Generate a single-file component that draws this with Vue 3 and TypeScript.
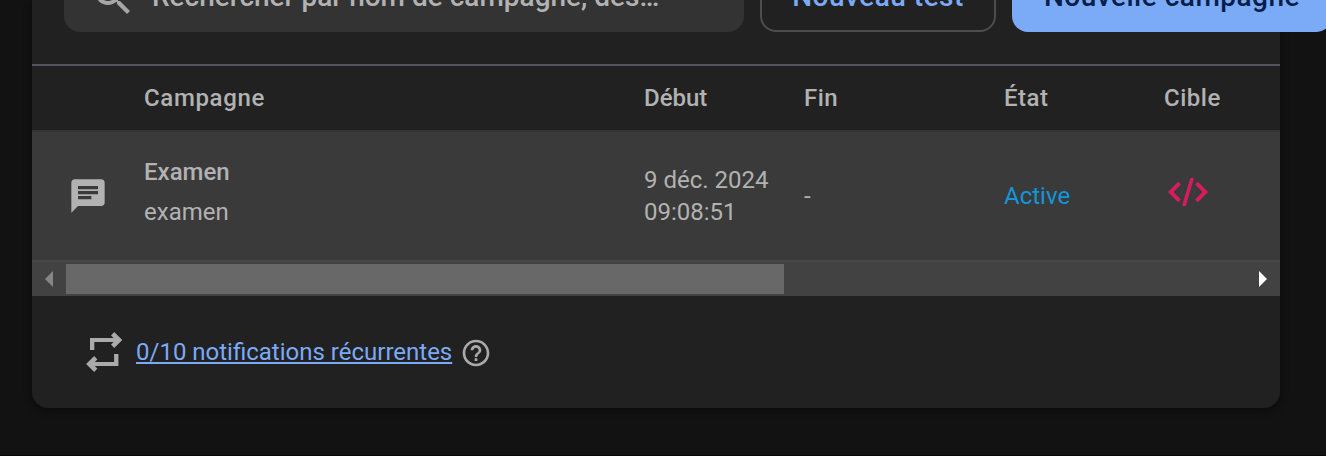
<script setup lang="ts">
interface Campaign {
  title: string
  body: string
  start: string[]
  end: string
  state: string
}

interface Column {
  key: string
  label: string
}

const columns: Column[] = [
  { key: 'kind-col', label: '' },
  { key: 'name-col', label: 'Campagne' },
  { key: 'start-col', label: 'Début' },
  { key: 'end-col', label: 'Fin' },
  { key: 'state-col', label: 'État' },
  { key: 'target-col', label: 'Cible' },
]

const campaigns: Campaign[] = [
  { title: 'Examen', body: 'examen', start: ['9 déc. 2024', '09:08:51'], end: '-', state: 'Active' },
]
</script>

<template>
  <div class="page">
    <section class="card">
      <div class="toolbar">
        <div class="search">
          <svg class="search-icon" viewBox="0 0 24 24">
            <path d="M15.5 14h-.79l-.28-.27A6.47 6.47 0 0 0 16 9.5 6.5 6.5 0 1 0 9.5 16c1.61 0 3.09-.59 4.23-1.57l.27.28v.79l5 4.99L20.49 19l-4.99-5zm-6 0C7.01 14 5 11.99 5 9.5S7.01 5 9.5 5 14 7.01 14 9.5 11.99 14 9.5 14z" />
          </svg>
          <span class="search-text">Rechercher par nom de campagne, des…</span>
        </div>
        <button class="btn outlined">Nouveau test</button>
        <button class="btn filled">Nouvelle campagne</button>
      </div>

      <div class="table">
        <div class="row head">
          <div v-for="col in columns" :key="col.key" :class="col.key">{{ col.label }}</div>
        </div>
        <div v-for="c in campaigns" :key="c.title" class="row data">
          <div class="kind">
            <svg viewBox="0 0 24 24">
              <path d="M20 2H4c-1.1 0-1.99.9-1.99 2L2 22l4-4h14c1.1 0 2-.9 2-2V4c0-1.1-.9-2-2-2zM6 9h12v2H6V9zm8 5H6v-2h8v2zm4-6H6V6h12v2z" />
            </svg>
          </div>
          <div class="name">
            <strong>{{ c.title }}</strong>
            <span>{{ c.body }}</span>
          </div>
          <div class="date">
            <span v-for="line in c.start" :key="line">{{ line }}</span>
          </div>
          <div>{{ c.end }}</div>
          <div class="state">{{ c.state }}</div>
          <div class="target">
            <svg viewBox="0 0 48 48">
              <path d="M4 24 14.2 13.8 16.8 16.4 9.500 24 16.800 31.600 14.200 34.200ZM44 24 33.800 13.800 31.200 16.400 38.500 24 31.200 31.600 33.800 34.200ZM26.300 10H30L21.800 38H18Z" />
            </svg>
          </div>
        </div>
      </div>

      <div class="scrollbar">
        <svg class="arrow left" viewBox="0 0 34 34"><path d="M21 9v16l-8-8z" /></svg>
        <div class="track"><div class="thumb"></div></div>
        <svg class="arrow right" viewBox="0 0 34 34"><path d="M13 9v16l8-8z" /></svg>
      </div>

      <footer class="footer">
        <svg class="repeat" viewBox="0 0 48 48">
          <path d="M10 22V10H33.6L31 7.4 34.2 4 42.3 12 34.2 20 31 16.6 33.6 14H14.3V22ZM38.400 26V38H14.800L17.400 40.600 14.200 44 6.100 36 14.200 28 17.400 31.400 14.800 34H34.100V26Z" />
        </svg>
        <a class="quota">0/10 notifications récurrentes</a>
        <svg class="help" viewBox="0 0 24 24">
          <path d="M11 18h2v-2h-2v2zm1-16C6.480 2 2 6.480 2 12s4.480 10 10 10 10-4.480 10-10S17.520 2 12 2zm0 18c-4.410 0-8-3.590-8-8s3.590-8 8-8 8 3.590 8 8-3.590 8-8 8zm0-14c-2.210 0-4 1.790-4 4h2c0-1.100.9-2 2-2s2 .9 2 2c0 2-3 1.750-3 5h2c0-2.250 3-2.500 3-5 0-2.210-1.790-4-4-4z" />
        </svg>
      </footer>
    </section>
  </div>
</template>

<style>
body {
  background: #121212;
}
</style>

<style scoped>
.page {
  box-sizing: border-box;
  height: 456px;
  padding: 0 46px 0 32px;
  overflow: hidden;
  background: #121212;
  border-bottom: 1px solid #0a0507;
  color: #b2b2b2;
  font: 400 24px/32px Roboto, sans-serif;
}

.card {
  height: 408px;
  background: #212121;
  border-radius: 0 0 16px 16px;
  box-shadow: 0 2px 8px rgba(0, 0, 0, 0.45);
}

.toolbar {
  box-sizing: border-box;
  display: flex;
  align-items: flex-end;
  gap: 16px;
  height: 66px;
  padding: 0 0 32px 32px;
  border-bottom: 2px solid #555560;
}

.search,
.btn {
  box-sizing: border-box;
  flex: none;
  height: 70px;
  border-radius: 16px;
}

.search {
  display: flex;
  align-items: center;
  gap: 15px;
  width: 680px;
  padding: 0 25px;
  background: #333333;
}

.search-icon {
  width: 48px;
  height: 48px;
  fill: #a6a6a6;
}

.search-text {
  color: #b2b2b2;
  font-weight: 500;
  font-size: 28px;
  white-space: nowrap;
}

.btn {
  padding: 0;
  border: 0;
  font: 500 28px/32px Roboto, sans-serif;
  letter-spacing: 0.5px;
  white-space: nowrap;
}

.outlined {
  width: 236px;
  border: 2px solid #4d4d4d;
  background: transparent;
  color: #7baaf7;
}

.filled {
  width: 320px;
  background: #7baaf7;
  color: #041e49;
}

.row {
  box-sizing: border-box;
  display: grid;
  grid-template-columns: 112px 500px 160px 200px 160px 116px;
  align-items: center;
}

.head {
  height: 66px;
  border-bottom: 2px solid #333333;
  font-weight: 500;
  letter-spacing: 0.5px;
}

.name-col {
  letter-spacing: 0.65px;
}

.start-col {
  letter-spacing: 0;
}

.data {
  height: 130px;
  border-bottom: 2px solid #484848;
  background: #3a3a3a;
}

.kind {
  display: flex;
  justify-content: center;
}

.kind svg {
  width: 40px;
  height: 40px;
  fill: #b2b2b2;
}

.name,
.date {
  display: flex;
  flex-direction: column;
}

.name {
  gap: 8px;
  margin-top: -8px;
}

.name strong {
  font-weight: 500;
}

.state {
  color: #1295db;
}

.target svg {
  display: block;
  width: 48px;
  height: 48px;
  margin-top: -8px;
  fill: #d81b60;
}

.scrollbar {
  display: flex;
  height: 34px;
  background: #424242;
}

.arrow {
  width: 34px;
  height: 34px;
}

.left {
  fill: #868686;
}

.right {
  fill: #ffffff;
}

.track {
  flex: 1;
  padding: 2px 0;
}

.thumb {
  width: 718px;
  height: 30px;
  background: #686868;
}

.footer {
  display: flex;
  align-items: center;
  height: 112px;
  padding-left: 48px;
}

.repeat {
  width: 48px;
  height: 48px;
  fill: #aaaaaa;
}

.quota {
  margin-left: 8px;
  color: #7baaf7;
  text-decoration: underline;
}

.help {
  width: 32px;
  height: 32px;
  margin: 2px 0 0 8px;
  fill: #aaaaaa;
}
</style>
